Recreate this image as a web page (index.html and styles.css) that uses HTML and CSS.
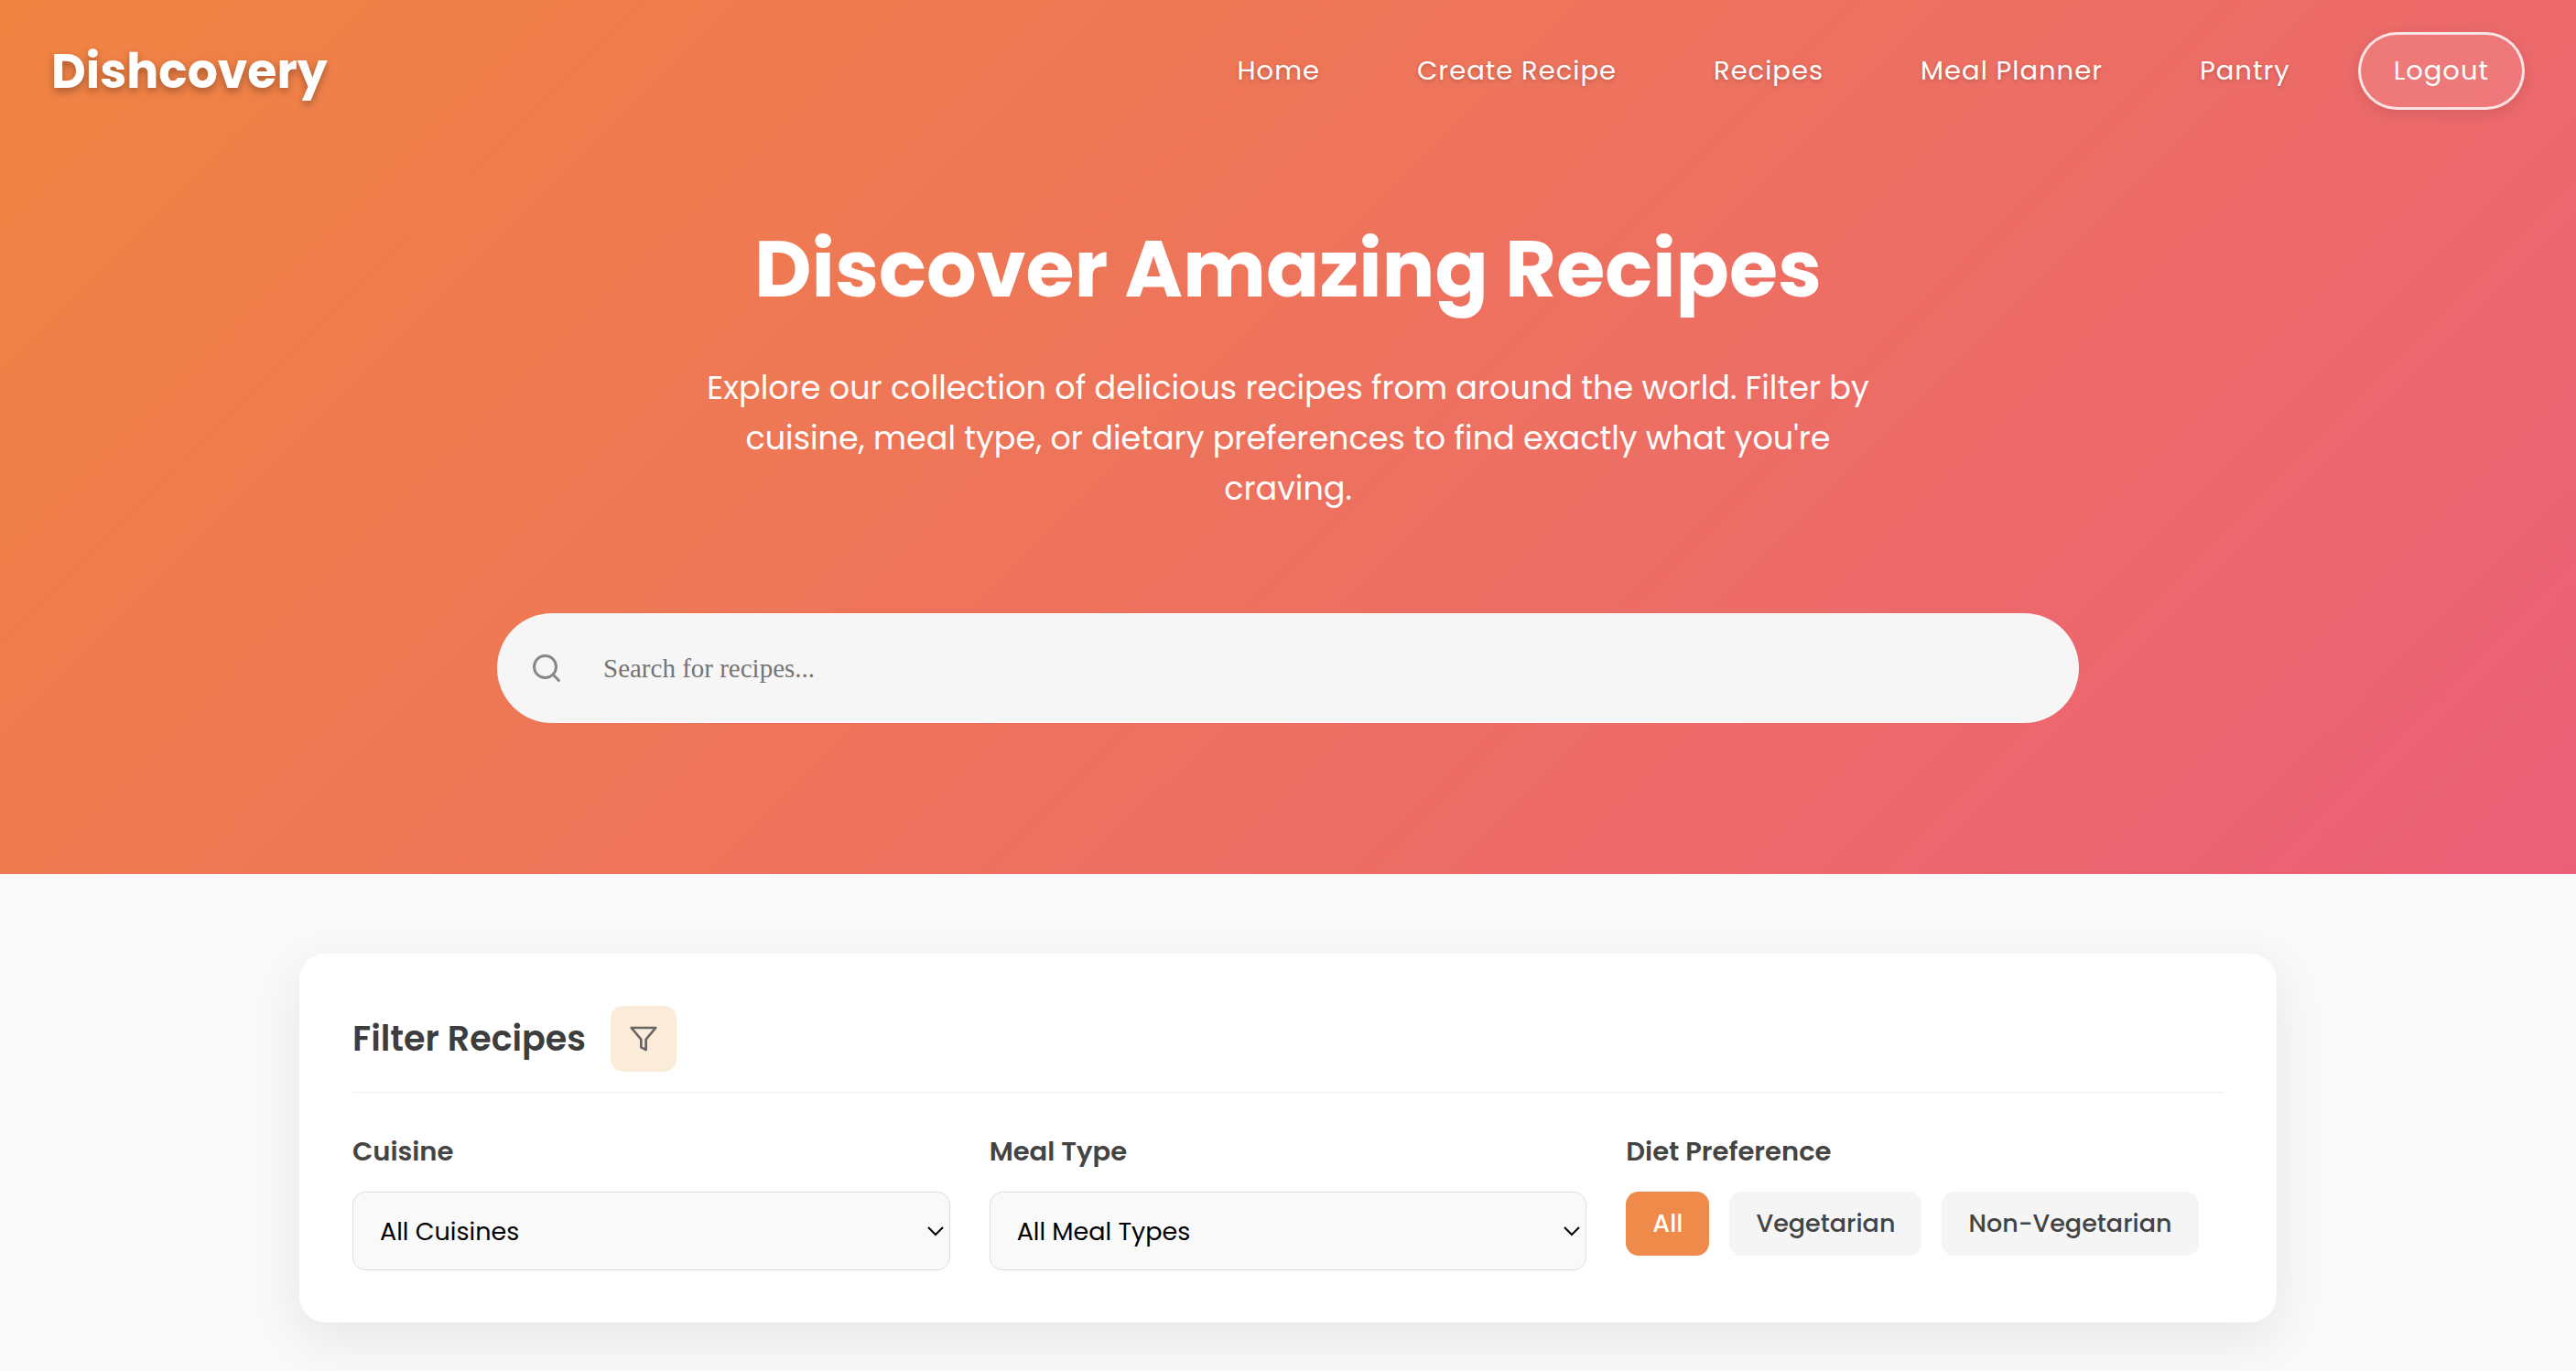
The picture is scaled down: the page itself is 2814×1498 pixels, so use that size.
FILE: index.html
```html
<!DOCTYPE html>
<html lang="en">
<head>
  <meta charset="utf-8">
  <meta name="viewport" content="width=device-width, initial-scale=1">
  <title>Dishcovery - Recipes</title>
  <link rel="stylesheet" href="styles.css">
</head>
<body>
  <header class="hero">
    <nav class="navbar" aria-label="Main">
      <a class="logo" href="#">Dishcovery</a>
      <div class="nav-right">
        <ul class="nav-links">
          <li><a class="nav-link" href="#">Home</a></li>
          <li><a class="nav-link" href="#">Create Recipe</a></li>
          <li><a class="nav-link" href="#">Recipes</a></li>
          <li><a class="nav-link" href="#">Meal Planner</a></li>
          <li><a class="nav-link" href="#">Pantry</a></li>
        </ul>
        <button class="logout" type="button">Logout</button>
      </div>
    </nav>
    <div class="hero-content">
      <h1 class="hero-title">Discover Amazing Recipes</h1>
      <p class="hero-text">Explore our collection of delicious recipes from around the world. Filter by cuisine, meal type, or dietary preferences to find exactly what you're craving.</p>
      <label class="search">
        <svg class="search-icon" viewBox="0 0 24 24" fill="none" stroke="currentColor" stroke-width="2" stroke-linecap="round" stroke-linejoin="round" aria-hidden="true"><circle cx="11" cy="11" r="8"/><path d="m21 21-4.35-4.35"/></svg>
        <input class="search-input" type="text" placeholder="Search for recipes..." aria-label="Search for recipes">
      </label>
    </div>
  </header>
  <main class="page">
    <section class="filters">
      <div class="filters-head">
        <h2 class="filters-title">Filter Recipes</h2>
        <button class="filter-toggle" type="button" aria-label="Toggle filters">
          <svg class="filter-icon" viewBox="0 0 24 24" fill="none" stroke="currentColor" stroke-width="2" stroke-linecap="round" stroke-linejoin="round" aria-hidden="true"><path d="M22 3H2l8 9.46V19l4 2v-8.54L22 3z"/></svg>
        </button>
      </div>
      <div class="filters-grid">
        <div class="field">
          <label class="field-label" for="cuisine">Cuisine</label>
          <div class="select-wrap">
            <select class="select" id="cuisine"><option>All Cuisines</option></select>
            <svg class="chevron" viewBox="0 0 20 12" fill="none" stroke="currentColor" stroke-width="2" aria-hidden="true"><path d="M2 2l8 8 8-8"/></svg>
          </div>
        </div>
        <div class="field">
          <label class="field-label" for="meal">Meal Type</label>
          <div class="select-wrap">
            <select class="select" id="meal"><option>All Meal Types</option></select>
            <svg class="chevron" viewBox="0 0 20 12" fill="none" stroke="currentColor" stroke-width="2" aria-hidden="true"><path d="M2 2l8 8 8-8"/></svg>
          </div>
        </div>
        <div class="field" role="group" aria-labelledby="diet">
          <span class="field-label" id="diet">Diet Preference</span>
          <div class="chips">
            <button class="chip chip-active" type="button">All</button>
            <button class="chip" type="button">Vegetarian</button>
            <button class="chip" type="button">Non-Vegetarian</button>
          </div>
        </div>
      </div>
    </section>
  </main>
</body>
</html>
```
FILE: styles.css
```css
* {
  box-sizing: border-box;
  margin: 0;
  padding: 0;
}

body {
  background: #f9f9f9;
  color: #333;
  font-family: Poppins, Inter, "Liberation Sans", sans-serif;
  font-size: 29px;
}

button,
select {
  font-family: inherit;
}

.hero {
  background: linear-gradient(135deg, #f08442, #eb6079);
  color: #fff;
  padding-bottom: 165px;
}

.navbar {
  display: flex;
  align-items: center;
  justify-content: space-between;
  padding: 35px 56px;
}

.logo {
  color: #fff;
  font-size: 52px;
  font-weight: 700;
  line-height: 78px;
  text-decoration: none;
  text-shadow: 0 4px 8px rgba(0, 0, 0, 0.3);
}

.nav-right {
  display: flex;
  align-items: center;
  gap: 38px;
}

.nav-links {
  display: flex;
  gap: 34px;
  list-style: none;
}

.nav-link {
  display: block;
  color: #fff;
  font-size: 29px;
  letter-spacing: 1px;
  line-height: 43px;
  padding: 0 36px;
  text-decoration: none;
  text-shadow: 0 2px 4px rgba(0, 0, 0, 0.2);
}

.logout {
  background: rgba(255, 255, 255, 0.1);
  border: 3px solid rgba(255, 255, 255, 0.8);
  border-radius: 45px;
  box-shadow: 0 4px 16px rgba(0, 0, 0, 0.1);
  color: #fff;
  font-size: 29px;
  letter-spacing: 1px;
  line-height: 43px;
  padding: 18px 36px;
}

.hero-content {
  display: flex;
  flex-direction: column;
  align-items: center;
  padding: 70px 56px 0;
}

.hero-title {
  font-size: 86px;
  font-weight: 700;
  line-height: 138px;
  text-align: center;
}

.hero-text {
  font-size: 35px;
  line-height: 55px;
  margin-top: 33px;
  max-width: 1280px;
  text-align: center;
}

.search {
  display: flex;
  align-items: center;
  background: #f6f6f6;
  border-radius: 60px;
  color: #888;
  gap: 44px;
  height: 120px;
  margin-top: 109px;
  max-width: 1728px;
  padding: 0 36px;
  width: 100%;
}

.search-icon {
  flex: none;
  height: 36px;
  width: 36px;
}

.search-input {
  background: none;
  border: 0;
  color: #333;
  flex: 1;
  font-family: "Liberation Serif", serif;
  font-size: 29px;
  outline: 0;
}

.search-input::placeholder {
  color: #757575;
}

.page {
  padding: 87px 56px;
}

.filters {
  background: #fff;
  border-radius: 29px;
  box-shadow: 0 18px 54px rgba(0, 0, 0, 0.08);
  margin: 0 auto;
  max-width: 2160px;
  padding: 57px 58px;
}

.filters-head {
  display: flex;
  align-items: center;
  border-bottom: 1px solid #eee;
  gap: 27px;
  padding-bottom: 22px;
}

.filters-title {
  color: #3d3d3d;
  font-size: 38px;
  font-weight: 600;
  line-height: 60px;
}

.filter-toggle {
  display: grid;
  place-items: center;
  background: #fbecda;
  border: 0;
  border-radius: 14px;
  color: #666;
  height: 72px;
  width: 72px;
}

.filter-icon {
  height: 32px;
  width: 32px;
}

.filters-grid {
  display: grid;
  gap: 43px;
  grid-template-columns: repeat(3, 1fr);
  margin-top: 43px;
}

.field-label {
  display: block;
  color: #444;
  font-size: 29px;
  font-weight: 600;
  line-height: 43px;
  margin-bottom: 22px;
}

.select-wrap {
  display: grid;
  align-items: center;
}

.select,
.chevron {
  grid-area: 1 / 1;
}

.select {
  appearance: none;
  background: #f9f9f9;
  border: 1px solid #ddd;
  border-radius: 14px;
  color: #000;
  font-size: 27px;
  height: 86px;
  padding: 0 29px;
  width: 100%;
}

.chevron {
  color: #000;
  height: 12px;
  justify-self: end;
  margin-right: 6px;
  pointer-events: none;
  width: 20px;
}

.chips {
  display: flex;
  flex-wrap: wrap;
  gap: 22px;
}

.chip {
  background: #f5f5f5;
  border: 0;
  border-radius: 14px;
  color: #444;
  font-size: 27px;
  font-weight: 500;
  height: 70px;
  padding: 0 29px;
}

.chip-active {
  background: #ee8b4a;
  color: #fff;
}
```
